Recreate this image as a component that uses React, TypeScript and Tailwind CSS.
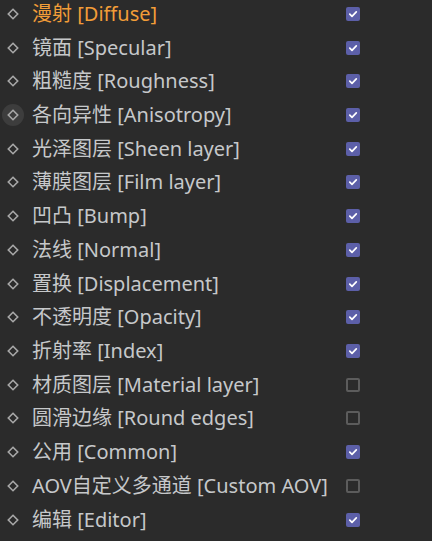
import React from "react";

type Item = { zh: string; en: string; checked: boolean };

const items: Item[] = [
  { zh: "漫射", en: "[Diffuse]", checked: true },
  { zh: "镜面", en: "[Specular]", checked: true },
  { zh: "粗糙度", en: "[Roughness]", checked: true },
  { zh: "各向异性", en: "[Anisotropy]", checked: true },
  { zh: "光泽图层", en: "[Sheen layer]", checked: true },
  { zh: "薄膜图层", en: "[Film layer]", checked: true },
  { zh: "凹凸", en: "[Bump]", checked: true },
  { zh: "法线", en: "[Normal]", checked: true },
  { zh: "置换", en: "[Displacement]", checked: true },
  { zh: "不透明度", en: "[Opacity]", checked: true },
  { zh: "折射率", en: "[Index]", checked: true },
  { zh: "材质图层", en: "[Material layer]", checked: false },
  { zh: "圆滑边缘", en: "[Round edges]", checked: false },
  { zh: "公用", en: "[Common]", checked: true },
  { zh: "AOV自定义多通道", en: "[Custom AOV]", checked: false },
  { zh: "编辑", en: "[Editor]", checked: true },
];

function Diamond({ hover }: { hover: boolean }) {
  return (
    <div
      className={`w-[22px] h-[22px] rounded-full flex items-center justify-center ${
        hover ? "bg-[#3d3d3d]" : ""
      }`}
    >
      <svg width="12" height="12" viewBox="0 0 12 12">
        <path
          d="M6 1.3 L10.7 6 L6 10.7 L1.3 6 Z"
          fill="none"
          stroke="#a8a8a8"
          strokeWidth="1.6"
        />
      </svg>
    </div>
  );
}

function Check({ checked }: { checked: boolean }) {
  if (!checked) {
    return (
      <div className="w-[14px] h-[14px] rounded-[2px] border-2 border-[#5c5c5c]" />
    );
  }
  return (
    <div className="w-[14px] h-[14px] rounded-[2px] bg-[#5c5fa8] flex items-center justify-center">
      <svg width="10" height="10" viewBox="0 0 10 10">
        <path
          d="M1.8 5.2 L4 7.3 L8.3 2.8"
          fill="none"
          stroke="#ffffff"
          strokeWidth="1.7"
          strokeLinecap="round"
          strokeLinejoin="round"
        />
      </svg>
    </div>
  );
}

export default function App() {
  return (
    <div
      className="w-[432px] h-[541px] bg-[#2b2b2b] overflow-hidden"
      style={{ fontFamily: '"Noto Sans", "Noto Sans CJK SC", sans-serif' }}
    >
      <div className="-mt-[3px]">
        {items.map((it, i) => (
          <div key={i} className="h-[33.73px] flex items-center">
            <div className="w-[32px] pl-[2px] flex items-center">
              <Diamond hover={i === 3} />
            </div>
            <div
              className={`w-[314px] text-[20px] leading-none whitespace-nowrap ${
                i === 0 ? "text-[#f29d38]" : "text-[#c6c8ca]"
              }`}
            >
              {it.zh} {it.en}
            </div>
            <Check checked={it.checked} />
          </div>
        ))}
      </div>
    </div>
  );
}
